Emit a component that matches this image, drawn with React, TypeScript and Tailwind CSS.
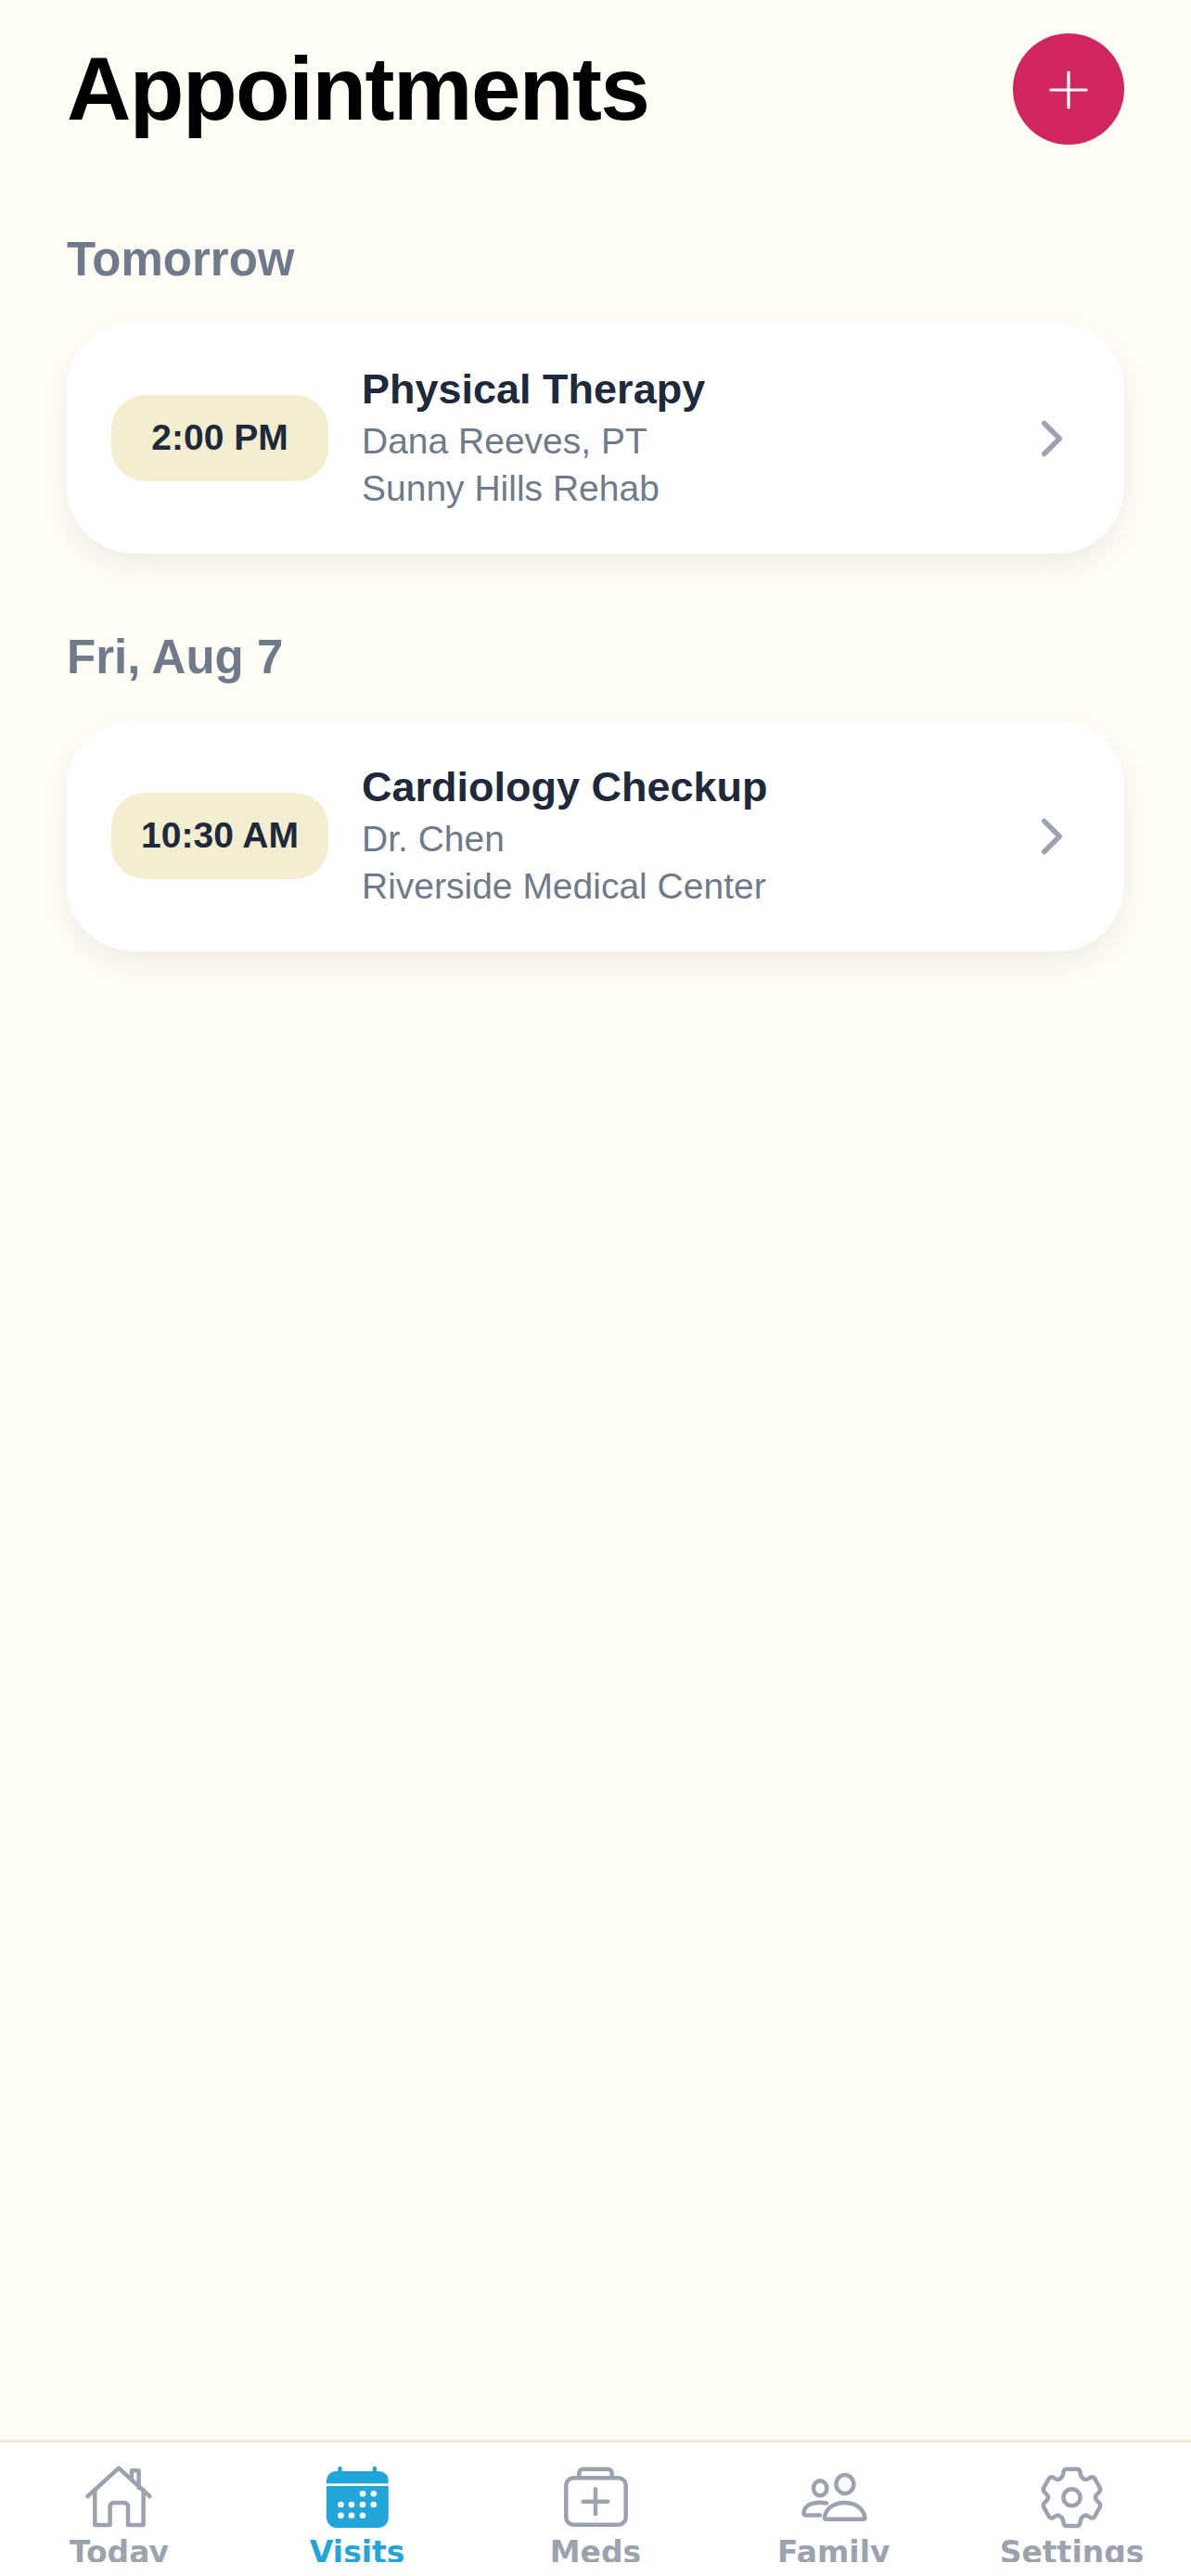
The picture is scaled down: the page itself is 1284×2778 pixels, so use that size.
import type { ReactNode } from "react";

const iconStroke = {
  fill: "none",
  stroke: "currentColor",
  strokeWidth: 4.5,
  strokeLinecap: "round",
  strokeLinejoin: "round",
} as const;

function IconDom() {
  return (
    <svg width="72" height="72" viewBox="0 0 72 72" {...iconStroke}>
      <path d="M2.6 35 L36 4.7 L69.3 35" />
      <path d="M10.3 28 V66 H26.6 V46 a4 4 0 0 1 4 -4 h11.4 a4 4 0 0 1 4 4 V66 H62.6 V28" />
      <path d="M50 14.7 V7.3 H57.6 V26" />
    </svg>
  );
}

function IconWizyty() {
  const kropki = [
    [42, 32.3], [53.8, 32.3],
    [18.5, 44], [30, 44], [42, 44], [53.8, 44],
    [18.5, 55.7], [30, 55.7], [42, 55.7],
  ];
  return (
    <svg width="72" height="72" viewBox="0 0 72 72">
      <path fill="currentColor" d="M3 21.3 V18 a10 10 0 0 1 10 -10 h2.3 V5 a2.2 2.2 0 0 1 4.4 0 V8 h32.9 V5 a2.2 2.2 0 0 1 4.4 0 V8 h2.2 a10 10 0 0 1 10.5 10 V21.3 Z" />
      <path fill="currentColor" d="M3 24 H69.8 V58 a11 11 0 0 1 -11 11 H14 a11 11 0 0 1 -11 -11 Z" />
      {kropki.map(([x, y]) => (
        <circle key={`${x}-${y}`} cx={x} cy={y} r="3.3" fill="#fff" />
      ))}
    </svg>
  );
}

function IconLeki() {
  return (
    <svg width="72" height="72" viewBox="0 0 72 72" {...iconStroke}>
      <rect x="4.3" y="15.3" width="64.4" height="50.4" rx="8" />
      <path d="M18.3 15 V10 a4.3 4.3 0 0 1 4.3 -4.3 h26.8 a4.3 4.3 0 0 1 4.3 4.3 V15" />
      <path d="M36 27.3 V54 M22.7 40.7 H49.3" />
    </svg>
  );
}

function IconRodzina() {
  return (
    <svg width="72" height="72" viewBox="0 0 72 72" {...iconStroke}>
      <ellipse cx="21.2" cy="26.3" rx="7.2" ry="8" />
      <ellipse cx="47.9" cy="22" rx="9.5" ry="10" />
      <path d="M28 42.5 C15 40 4 44 3.5 53 Q3.5 55.5 6 55.5 H21" />
      <path d="M26 58 C27 48 36 42 47.5 42 C59 42 68 48 69.5 58 Q69.7 59.7 68 59.7 H28 Q26 59.7 26 58 Z" />
    </svg>
  );
}

function IconUstawienia() {
  return (
    <svg width="72" height="72" viewBox="0 0 72 72" {...iconStroke}>
      <path d="M30 5.7 H41 Q44 5.7 44.4 8.7 L44.8 11 Q45.5 14.5 48.5 16.3 Q51 17.8 53.5 16 L55 15 Q58 13.2 60 15.7 L65.6 25.5 Q67 28.5 65 30.5 L62.5 33 Q59.5 36.3 62.5 39.6 L65 42 Q67 44.2 65.6 47 L60 57 Q58 59.5 55 57.7 L53.5 56.7 Q51 54.8 48.5 56.3 Q45.5 58 44.8 61.6 L44.4 64 Q44 67 41 67 H30 Q27 67 26.6 64 L26.2 61.6 Q25.5 58 22.5 56.3 Q20 54.8 17.5 56.7 L16 57.7 Q13 59.5 11 57 L5.4 47 Q4 44.2 6 42 L8.5 39.6 Q11.5 36.3 8.5 33 L6 30.5 Q4 28.5 5.4 25.5 L11 15.7 Q13 13.2 16 15 L17.5 16 Q20 17.8 22.5 16.3 Q25.5 14.5 26.2 11 L26.6 8.7 Q27 5.7 30 5.7 Z" />
      <circle cx="35.5" cy="36.3" r="9" />
    </svg>
  );
}

function KartaWizyty({ godzina, tytul, lekarz, miejsce }: { godzina: string; tytul: string; lekarz: string; miejsce: string }) {
  return (
    <article className="flex h-[249px] items-center rounded-[72px] bg-white pl-12 pr-[45px] shadow-[0_12px_30px_rgba(0,0,0,0.07)]">
      <div className="flex h-[93px] w-[234px] shrink-0 items-center justify-center rounded-[36px] bg-[#f3eecf] text-[39px] font-bold text-[#1e293b]">
        {godzina}
      </div>
      <div className="ml-9 min-w-0 flex-1 pb-[5px]">
        <h3 className="text-[45px] leading-[63px] font-bold text-[#1e293b]">{tytul}</h3>
        <p className="text-[39px] leading-[50px] text-[#6f7a8b]">{lekarz}</p>
        <p className="text-[39px] leading-[51px] text-[#6f7a8b]">{miejsce}</p>
      </div>
      <svg width="66" height="66" viewBox="0 0 24 24" fill="none" stroke="#9ca3af" strokeWidth="2" strokeLinecap="round" strokeLinejoin="round">
        <path d="m9 18 6-6-6-6" />
      </svg>
    </article>
  );
}

function ZakladkaNawigacji({ ikona, etykieta, aktywna }: { ikona: ReactNode; etykieta: string; aktywna?: boolean }) {
  return (
    <div className={`flex flex-1 flex-col items-center ${aktywna ? "text-[#22a6d9]" : "text-[#9ca3af]"}`}>
      {ikona}
      <span className="h-[34px] overflow-hidden text-[33px] leading-[47px] font-bold">{etykieta}</span>
    </div>
  );
}

export default function App() {
  return (
    <div className="flex h-[2778px] flex-col bg-[#fffdf5] font-['Liberation_Sans',Arial,sans-serif]">
      <main className="min-h-0 flex-1 px-[72px] pt-9">
        <header className="flex items-center justify-between">
          <h1 className="text-[96px] leading-[120px] font-bold tracking-[-1.5px] text-black">Appointments</h1>
          <button type="button" className="flex size-[120px] items-center justify-center rounded-full bg-[#d12660]">
            <svg width="54" height="54" viewBox="0 0 54 54" fill="none" stroke="#fff" strokeWidth="3.2" strokeLinecap="round">
              <path d="M27 9 V47 M8 28 H46" />
            </svg>
          </button>
        </header>

        <section className="mt-[94px]">
          <h2 className="text-[51px] leading-[60px] font-bold text-[#6f7a8b]">Tomorrow</h2>
          <div className="mt-[38px]">
            <KartaWizyty godzina="2:00 PM" tytul="Physical Therapy" lekarz="Dana Reeves, PT" miejsce="Sunny Hills Rehab" />
          </div>
        </section>

        <section className="mt-[82px]">
          <h2 className="text-[51px] leading-[60px] font-bold text-[#6f7a8b]">Fri, Aug 7</h2>
          <div className="mt-[38px]">
            <KartaWizyty godzina="10:30 AM" tytul="Cardiology Checkup" lekarz="Dr. Chen" miejsce="Riverside Medical Center" />
          </div>
        </section>
      </main>

      <nav className="flex h-[147px] shrink-0 items-start border-t-[3px] border-[#f3ebd8] bg-white pt-[23px] font-['DejaVu_Sans',sans-serif]">
        <ZakladkaNawigacji ikona={<IconDom />} etykieta="Today" />
        <ZakladkaNawigacji ikona={<IconWizyty />} etykieta="Visits" aktywna />
        <ZakladkaNawigacji ikona={<IconLeki />} etykieta="Meds" />
        <ZakladkaNawigacji ikona={<IconRodzina />} etykieta="Family" />
        <ZakladkaNawigacji ikona={<IconUstawienia />} etykieta="Settings" />
      </nav>
    </div>
  );
}
